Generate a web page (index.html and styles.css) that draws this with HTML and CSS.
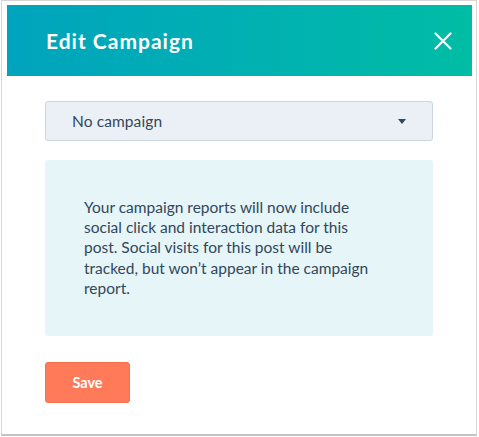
FILE: index.html
```html
<!DOCTYPE html>
<html>
<head>
<meta charset="utf-8">
<link rel="stylesheet" href="styles.css">
</head>
<body>
<div class="frame">
  <div class="modal">
    <div class="modal-header">
      <h1 class="modal-title">Edit Campaign</h1>
      <button class="close-btn" aria-label="Close">
        <svg width="18" height="18" viewBox="0 0 18 18"><path d="M1.5 1.5 L16.5 16.5 M16.5 1.5 L1.5 16.5" stroke="#fff" stroke-width="2.2" stroke-linecap="round" fill="none"/></svg>
      </button>
    </div>
    <div class="modal-body">
      <div class="select">
        <span class="select-label">No campaign</span>
        <span class="caret"></span>
      </div>
      <div class="info">
        <p class="info-text">Your campaign reports will now include social click and interaction data for this post. Social visits for this post will be tracked, but won’t appear in the campaign report.</p>
      </div>
      <button class="save-btn">Save</button>
    </div>
  </div>
</div>
</body>
</html>
```

FILE: styles.css
```css
* { box-sizing: border-box; }
html, body { margin: 0; padding: 0; background: #fff; }
body { font-family: Lato, "Open Sans", sans-serif; color: #33475b; }

.frame {
  margin-left: 1px;
  width: 476px;
  height: 436px;
  border: 1px solid #d6d6d6;
  border-bottom: 2px solid #c4c4c4;
  padding: 4px 4px 0 5px;
}

.modal-header {
  height: 71px;
  background: linear-gradient(90deg, #00a4bd 0%, #00b2b0 60%, #00bda5 100%);
  display: flex;
  align-items: center;
  justify-content: space-between;
  padding: 0 20px 0 39px;
}

.modal-title {
  margin: 0;
  font-size: 21px;
  font-weight: 700;
  color: #fff;
  letter-spacing: 1px;
  padding-bottom: 1px;
}

.close-btn {
  background: none;
  border: 0;
  padding: 0;
  width: 18px;
  height: 18px;
  display: flex;
  cursor: pointer;
}

.modal-body {
  padding: 25px 39px 0 38px;
}

.select {
  height: 40px;
  background: #eaf0f6;
  border: 1px solid #cbd6e2;
  border-radius: 3px;
  display: flex;
  align-items: center;
  justify-content: space-between;
  padding: 0 26px 0 26px;
}

.select-label {
  font-size: 15.5px;
  color: #33475b;
  letter-spacing: 0.1px;
}

.caret {
  width: 0;
  height: 0;
  border-left: 4.5px solid transparent;
  border-right: 4.5px solid transparent;
  border-top: 5px solid #33475b;
  margin-top: 1px;
}

.info {
  margin-top: 19px;
  height: 176px;
  background: #e5f5f8;
  border-radius: 3px;
  padding: 37px 60px 0 39px;
}

.info-text {
  margin: 0;
  font-size: 15.5px;
  line-height: 20.2px;
  color: #33475b;
}

.save-btn {
  margin-top: 26px;
  width: 85px;
  height: 41px;
  background: #ff7a59;
  border: 1px solid #f5714f;
  border-radius: 3px;
  color: #fff;
  font-family: Lato, sans-serif;
  font-weight: 700;
  font-size: 14.5px;
  padding: 0;
}
```
